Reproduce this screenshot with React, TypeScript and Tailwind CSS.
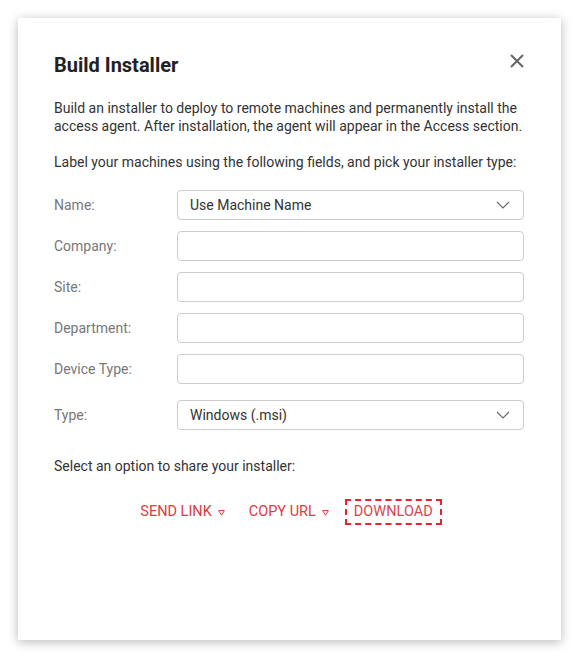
import React from "react";

const fields = [
  { label: "Name:", kind: "select", value: "Use Machine Name" },
  { label: "Company:", kind: "text" },
  { label: "Site:", kind: "text" },
  { label: "Department:", kind: "text" },
  { label: "Device Type:", kind: "text" },
];

function Chevron() {
  return (
    <svg width="14" height="8" viewBox="0 0 14 8" fill="none" className="shrink-0">
      <path d="M1 1l6 6 6-6" stroke="#666" strokeWidth="1.1" />
    </svg>
  );
}

function Caret() {
  return (
    <svg width="7" height="6" viewBox="0 0 7 6" fill="none" className="ml-[6px] mt-[1px]">
      <path d="M0.6 0.6h5.8L3.5 5.2z" stroke="#e0393e" strokeWidth="1" strokeLinejoin="round" />
    </svg>
  );
}

function SelectBox({ value }: { value: string }) {
  return (
    <div className="flex h-[30px] flex-1 items-center justify-between rounded-[4px] border border-[#cccccc] pl-[12px] pr-[13px] text-[14px] text-[#333]">
      <span>{value}</span>
      <Chevron />
    </div>
  );
}

export default function App() {
  return (
    <div className="min-h-screen bg-white p-[18px]" style={{ fontFamily: "Roboto, 'Liberation Sans', sans-serif" }}>
      <div className="flex h-[622px] w-[543px] flex-col bg-white pl-[36px] pr-[37px] pt-[35px] shadow-[0_2px_10px_rgba(0,0,0,0.28)]">
        <div className="flex items-center justify-between">
          <h1 className="text-[20px] font-bold leading-[25px] text-[#222]">Build Installer</h1>
          <button className="mr-0 -mt-[10px]" aria-label="Close">
            <svg width="14" height="14" viewBox="0 0 14 14" fill="none">
              <path d="M1 1l12 12M13 1L1 13" stroke="#666" strokeWidth="2" />
            </svg>
          </button>
        </div>

        <p className="mt-[21px] text-[14px] leading-[18px] text-[#333]">
          Build an installer to deploy to remote machines and permanently install the access agent. After installation, the agent will appear in the Access section.
        </p>
        <p className="mt-[18px] text-[14px] leading-[18px] text-[#333]">
          Label your machines using the following fields, and pick your installer type:
        </p>

        <div className="mt-[19px] flex flex-col gap-[11px]">
          {fields.map((f) => (
            <div key={f.label} className="flex items-center">
              <span className="w-[123px] text-[14px] text-[#777]">{f.label}</span>
              {f.kind === "select" ? (
                <SelectBox value={f.value!} />
              ) : (
                <div className="h-[30px] flex-1 rounded-[4px] border border-[#cccccc]" />
              )}
            </div>
          ))}
        </div>

        <div className="mt-[16px] flex items-center">
          <span className="w-[123px] text-[14px] text-[#777]">Type:</span>
          <SelectBox value="Windows (.msi)" />
        </div>

        <p className="mt-[27px] text-[14px] leading-[18px] text-[#333]">Select an option to share your installer:</p>

        <div className="mt-[24px] flex items-center justify-center pl-[4px] text-[14.5px] text-[#e0393e]">
          <button className="flex items-center">
            SEND LINK
            <Caret />
          </button>
          <button className="ml-[24px] flex items-center">
            COPY URL
            <Caret />
          </button>
          <button className="ml-[16px] flex h-[26px] items-center border-2 border-dashed border-[#e8232f] px-[7px] text-[#d9454c]">
            DOWNLOAD
          </button>
        </div>
      </div>
    </div>
  );
}
